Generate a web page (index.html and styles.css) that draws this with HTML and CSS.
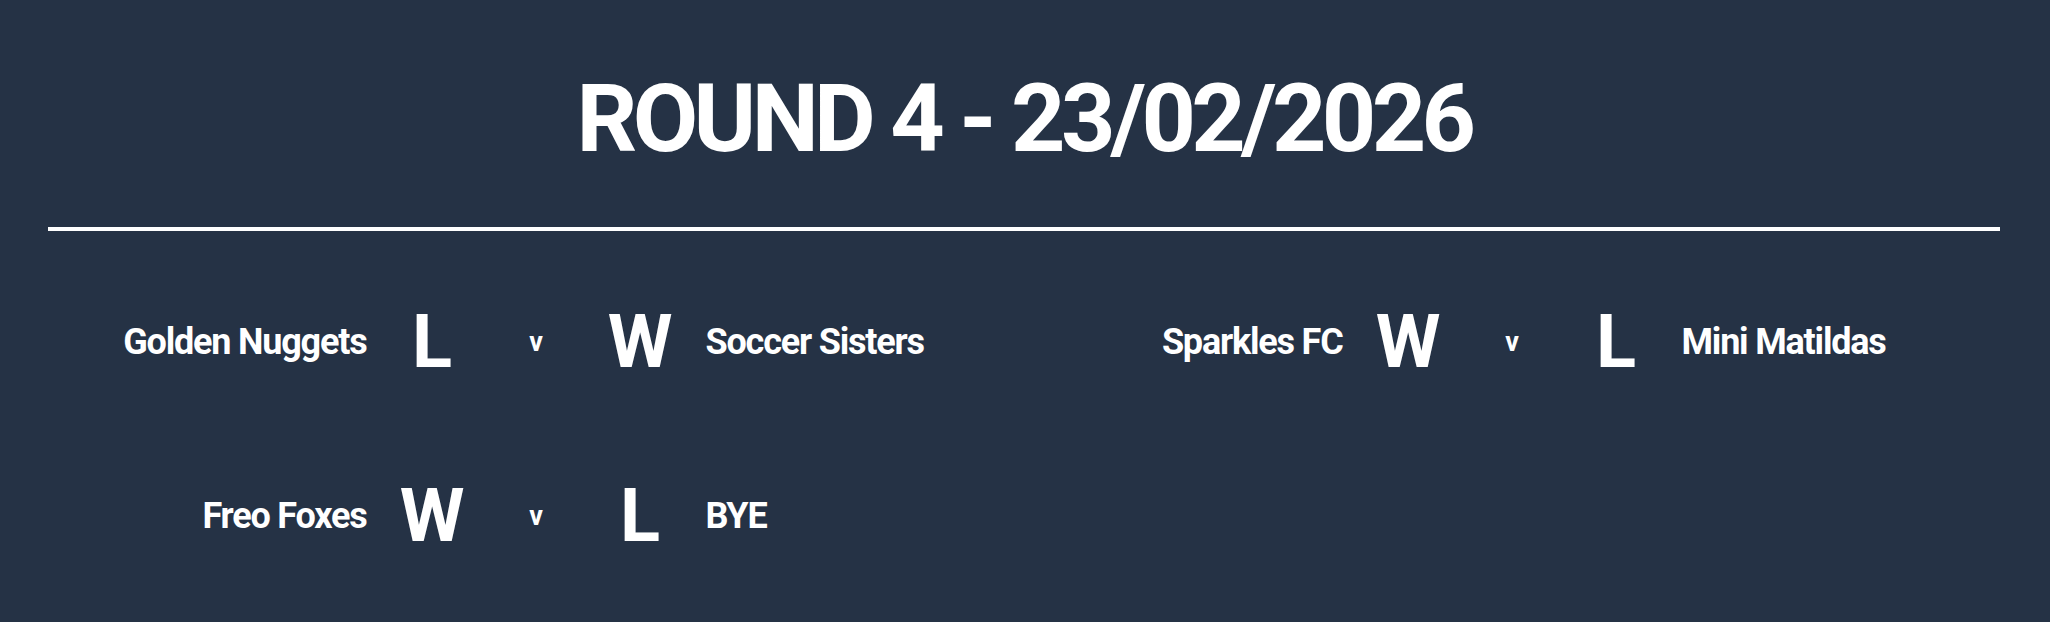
FILE: index.html
```html
<!DOCTYPE html>
<html lang="en">
<head>
<meta charset="utf-8">
<title>Round 4 - 23/02/2026</title>
<link rel="stylesheet" href="styles.css">
</head>
<body>
  <main class="page">
    <h1 class="round-title">ROUND 4 - 23/02/2026</h1>
    <hr class="divider">
    <section class="matches">
      <div class="match">
        <span class="team team-home">Golden Nuggets</span>
        <span class="result">L</span>
        <span class="versus">v</span>
        <span class="result">W</span>
        <span class="team team-away">Soccer Sisters</span>
      </div>
      <div class="match">
        <span class="team team-home">Sparkles FC</span>
        <span class="result">W</span>
        <span class="versus">v</span>
        <span class="result">L</span>
        <span class="team team-away">Mini Matildas</span>
      </div>
      <div class="match">
        <span class="team team-home">Freo Foxes</span>
        <span class="result">W</span>
        <span class="versus">v</span>
        <span class="result">L</span>
        <span class="team team-away">BYE</span>
      </div>
    </section>
  </main>
</body>
</html>
```
FILE: styles.css
```css
html, body {
  margin: 0;
  padding: 0;
}

body {
  background: #253245;
  color: #ffffff;
  font-family: Roboto, "Liberation Sans", sans-serif;
  font-weight: 700;
  width: 2050px;
  height: 622px;
  overflow: hidden;
}

.page {
  padding: 0 50px 0 48px;
}

.round-title {
  margin: 71px 0 0;
  font-size: 95px;
  line-height: 1;
  font-weight: 700;
  text-align: center;
  letter-spacing: -4.6px;
}

.divider {
  margin: 61px 0 0;
  border: 0;
  height: 4px;
  background: #ffffff;
}

.matches {
  margin-top: 74px;
  display: grid;
  grid-template-columns: 1fr 1fr;
  row-gap: 100px;
}

.match {
  display: flex;
  align-items: center;
  gap: 20px;
  height: 74px;
}

.team {
  flex: 1 1 0;
  font-size: 36px;
  line-height: 1;
  letter-spacing: -1.2px;
  white-space: nowrap;
}

.team-home {
  text-align: right;
}

.team-away {
  text-align: left;
}

.result {
  width: 91px;
  flex: none;
  text-align: center;
  font-size: 74px;
  font-weight: 700;
  line-height: 1;
}

.versus {
  width: 77px;
  flex: none;
  text-align: center;
  font-size: 27px;
  line-height: 1;
}
```
